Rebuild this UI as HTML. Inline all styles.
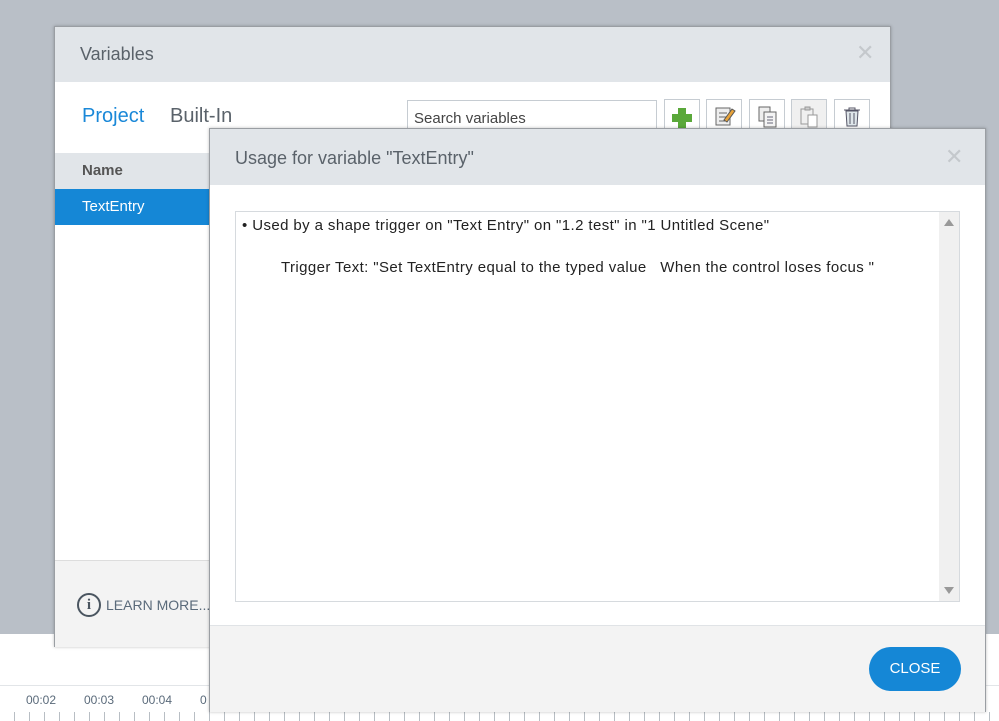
<!DOCTYPE html>
<html><head><meta charset="utf-8"><style>
*{margin:0;padding:0;box-sizing:border-box}
body{width:999px;height:721px;overflow:hidden;position:relative;background:#fff;font-family:"Liberation Sans",sans-serif;color:#333}
.abs{position:absolute}
.bg{left:0;top:0;width:999px;height:634px;background:#b9bfc7}
.tl{left:0;top:685px;width:999px;height:36px;background:#fff;border-top:1px solid #e2e5e8}
.tl span{position:absolute;top:7px;font-size:12px;color:#5a6a7a}
.dlg{border:1px solid #9a9ea3;box-shadow:0 0 3px rgba(0,0,0,.25);background:#fff}
.hdr{background:#e1e5e9;position:absolute;left:0;right:0;top:0}
.x{position:absolute;color:#c4c8cc;font-size:22px}
.btn{position:absolute;top:99px;width:36px;height:34px;border:1px solid #c6ccd2;background:#fff}
.t{font-size:15px;letter-spacing:0.4px;color:#222;white-space:pre}
</style></head><body>
<div class="abs bg"></div>
<div class="abs tl">
<span style="left:26px">00:02</span><span style="left:84px">00:03</span><span style="left:142px">00:04</span><span style="left:200px">0</span>
<div class="abs" style="left:0;top:26px;width:999px;height:9px;background:repeating-linear-gradient(90deg,transparent 0 14px,#b8bec4 14px 15px)"></div>
</div>

<div class="abs dlg" style="left:54px;top:26px;width:837px;height:621px">
 <div class="hdr" style="height:55px"><div class="abs" style="left:25px;top:17px;font-size:18px;color:#5a626a">Variables</div><div class="x" style="left:801px;top:13px">✕</div></div>
 <div class="abs" style="left:27px;top:78px;font-size:20px;color:#1a88d8">Project</div>
 <div class="abs" style="left:115px;top:78px;font-size:20px;color:#5a626a">Built-In</div>
 <div class="abs" style="left:352px;top:73px;width:250px;height:36px;border:1px solid #c6ccd2;font-size:15px;padding:9px 6px;color:#444">Search variables</div>
 <div class="abs" style="left:0;top:126px;width:160px;height:36px;background:#e1e5e9;font-size:15px;font-weight:bold;color:#555;padding:9px 27px">Name</div>
 <div class="abs" style="left:0;top:162px;width:160px;height:36px;background:#1587d6;font-size:15px;color:#fff;padding:9px 27px">TextEntry</div>
 <div class="abs" style="left:0;top:533px;width:835px;height:87px;background:#f3f3f3;border-top:1px solid #ddd"></div>
 <div class="abs" style="left:22px;top:566px;width:24px;height:24px;border:2px solid #4a5560;border-radius:50%;text-align:center;font:bold 15px 'Liberation Serif',serif;line-height:20px;color:#4a5560">i</div>
 <div class="abs" style="left:51px;top:570px;font-size:14px;color:#5a6a7a">LEARN MORE...</div>
</div>
<div class="btn" style="left:664px"><svg width="34" height="32"><path d="M13 8h8v6h6v8h-6v6h-8v-6h-6v-8h6z" fill="#5aa83a"/></svg></div>
<div class="btn" style="left:706px"><svg width="34" height="32"><rect x="9" y="8" width="14" height="17" fill="#eee" stroke="#666"/><path d="M12 13h8M12 17h8M12 21h6" stroke="#666"/><path d="M17 20l8-11 3 2-8 11z" fill="#e8a33a" stroke="#555"/></svg></div>
<div class="btn" style="left:749px"><svg width="34" height="32"><rect x="9" y="7" width="11" height="14" fill="#eee" stroke="#666"/><rect x="14" y="12" width="12" height="15" fill="#f4f4f4" stroke="#666"/><path d="M17 17h6M17 20h6M17 23h6" stroke="#667"/></svg></div>
<div class="btn" style="left:791px;background:#f0f0f0"><svg width="34" height="32"><rect x="9" y="9" width="12" height="15" fill="none" stroke="#999"/><rect x="13" y="7" width="5" height="3" fill="#ccc" stroke="#999"/><rect x="16" y="15" width="9" height="12" fill="#fff" stroke="#999"/></svg></div>
<div class="btn" style="left:834px"><svg width="34" height="32"><path d="M9 10h16M14 10v-2h6v2" stroke="#556" fill="none"/><path d="M11 11l1 15h10l1-15z" fill="#dfe6ea" stroke="#556"/><path d="M15 13v11M19 13v11" stroke="#556"/></svg></div>

<div class="abs dlg" style="left:209px;top:128px;width:777px;height:584px">
 <div class="hdr" style="height:56px"><div class="abs" style="left:25px;top:19px;font-size:18px;color:#5a626a">Usage for variable "TextEntry"</div><div class="x" style="left:735px;top:15px">✕</div></div>
 <div class="abs" style="left:25px;top:82px;width:725px;height:391px;border:1px solid #d6dade">
  <div class="abs" style="right:0;top:0;width:20px;height:389px;background:#f0f0f0"></div>
  <div class="abs" style="right:5px;top:7px;width:0;height:0;border:5px solid transparent;border-bottom:7px solid #999;border-top:0"></div>
  <div class="abs" style="right:5px;bottom:7px;width:0;height:0;border:5px solid transparent;border-top:7px solid #999;border-bottom:0"></div>
  <div class="abs t" style="left:6px;top:5px">• Used by a shape trigger on "Text Entry" on "1.2 test" in "1 Untitled Scene"</div>
  <div class="abs t" style="left:45px;top:47px">Trigger Text: "Set TextEntry equal to the typed value   When the control loses focus "</div>
 </div>
 <div class="abs" style="left:0;top:496px;width:775px;height:87px;background:#f3f3f3;border-top:1px solid #e0e3e6"></div>
 <div class="abs" style="left:659px;top:518px;width:92px;height:44px;border-radius:22px;background:#1587d6;color:#fff;font-size:15px;text-align:center;line-height:44px">CLOSE</div>
</div>
</body></html>
